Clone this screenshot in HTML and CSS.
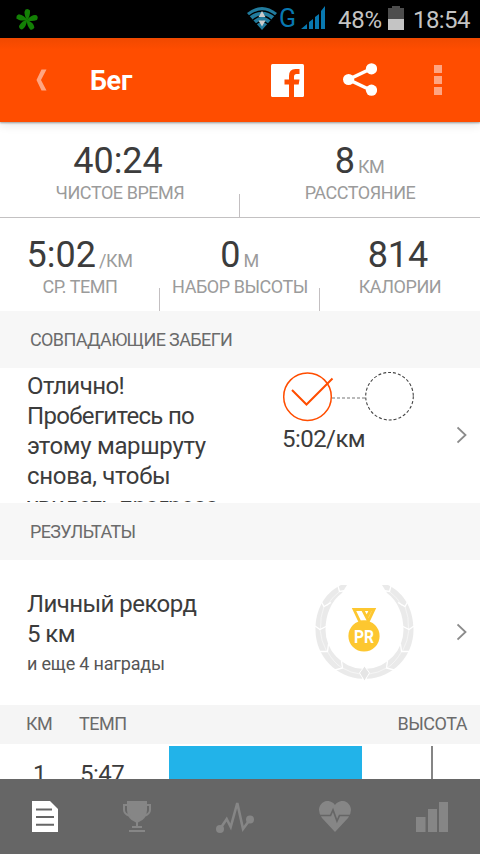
FILE: index.html
```html
<!DOCTYPE html>
<html lang="ru">
<head>
<meta charset="utf-8">
<title>Бег</title>
<link rel="stylesheet" href="styles.css">
</head>
<body>
<div class="status">
  <svg class="leaf" width="24" height="24" viewBox="0 0 24 24" fill="#138005"><path id="petal" d="M12 12.500Q8 5 10.500 1.500Q13 0 15 2.500Q15.500 8 12 12.500Z"/><use href="#petal" transform="rotate(72 12 12)"/><use href="#petal" transform="rotate(144 12 12)"/><use href="#petal" transform="rotate(216 12 12)"/><use href="#petal" transform="rotate(288 12 12)"/></svg>
  <svg class="wifi" width="30" height="24" viewBox="0 0 30 24"><path d="M0 7Q15-5 30 7L15 24Z" fill="#217b9d"/><path d="M2 10Q15 0 28 10M6 14Q15 6 24 14M9 18Q15 13 21 18" fill="none" stroke="#000" stroke-width="1.300"/><path d="M11.500 11L15 5L18.500 11ZM11.500 14.500H18.500L15 20.500Z" fill="#ccc"/></svg>
  <span class="net">G</span>
  <svg class="signal" width="24" height="23" viewBox="0 0 24 23" fill="#0878b0"><path d="M0 23L6 18V23ZM8 16L12 13V23H8ZM14 11L18 8V23H14ZM20 5L24 0V23H20Z"/></svg>
  <span class="pct">48%</span>
  <svg class="battery" width="16" height="24" viewBox="0 0 16 24"><path d="M4 0H12V2H16V13H0V2H4Z" fill="#4d4d4d"/><path d="M0 13H16V24H0Z" fill="#c4c4c4"/></svg>
  <span class="clock">18:54</span>
</div>
<header class="bar">
  <svg class="back" width="11" height="22" viewBox="0 0 11 22"><path d="M5.500 0.500H10.500L5 11L10.500 21.500H5.500L0.500 11Z" fill="#ffa581"/></svg>
  <h1>Бег</h1>
  <svg class="fb" width="33" height="33" viewBox="0 0 33 33"><rect width="33" height="33" rx="1.500" fill="#fff"/><path d="M18 33V20.500H13.500V15.500H18V12Q18 5 24.500 5H28.500V10H25.500Q23 10 23 12.500V15.500H28.500L27.700 20.500H23V33Z" fill="#ff4d00"/></svg>
  <svg class="share" width="34" height="34" viewBox="0 0 34 34"><path d="M28.500 5.500L5.500 16.500L28.500 27.500" fill="none" stroke="#fff" stroke-width="3.600"/><g fill="#fff"><circle cx="28.500" cy="5.800" r="5.600"/><circle cx="5.600" cy="16.500" r="5.600"/><circle cx="28.500" cy="27.200" r="5.600"/></g></svg>
  <svg class="more" width="8" height="30" viewBox="0 0 8 30" fill="#ffa581"><path d="M0 0H8V8H0ZM0 11H8V19H0ZM0 22H8V30H0Z"/></svg>
</header>
<main>
  <section class="stats two">
    <div class="stat"><p class="value plain">40:24</p><p class="label">ЧИСТОЕ ВРЕМЯ</p></div>
    <div class="stat"><p class="value">8<small>КМ</small></p><p class="label">РАССТОЯНИЕ</p></div>
  </section>
  <section class="stats three">
    <div class="stat"><p class="value">5:02<small>/КМ</small></p><p class="label">СР. ТЕМП</p></div>
    <div class="stat"><p class="value">0<small>М</small></p><p class="label">НАБОР ВЫСОТЫ</p></div>
    <div class="stat"><p class="value plain">814</p><p class="label">КАЛОРИИ</p></div>
  </section>
  <h2>СОВПАДАЮЩИЕ ЗАБЕГИ</h2>
  <section class="matched">
    <p class="message">Отлично!<br><span class="tight">Пробегитесь по</span><br><span class="loose">этому маршруту</span><br><span class="loose">снова, чтобы</span><br>увидеть прогресс</p>
    <div class="progress">
      <svg width="132" height="50" viewBox="0 0 132 50" fill="none"><circle cx="25.500" cy="24.700" r="23.800" stroke="#ff4d00" stroke-width="1.500"/><path d="M10 18L24.500 32.500L50.500 6.500" stroke="#ff4d00" stroke-width="2"/><path d="M50 26H84" stroke="#777" stroke-width="1.200" stroke-dasharray="3 2"/><circle cx="107.500" cy="24.200" r="23.800" stroke="#444" stroke-width="1.100" stroke-dasharray="3 2"/></svg>
      <p>5:02/км</p>
    </div>
    <svg class="chevron" width="10" height="18" viewBox="0 0 10 18"><path d="M.500 1.500L8.500 9L.500 16.500" fill="none" stroke="#8b8b8b" stroke-width="1.800"/></svg>
  </section>
  <h2>РЕЗУЛЬТАТЫ</h2>
  <section class="results">
    <div class="record"><p>Личный рекорд</p><p>5 км</p><p class="extra">и еще 4 награды</p></div>
    <svg class="award" width="100" height="98" viewBox="0 0 100 98">
      <g id="branch"><path d="M32 1H26C8 10 .500 27 .500 46A49 49 0 0 0 47 94.800V84.800A39 39 0 0 1 10.500 46C10.500 31 16 17 27 9Z" fill="#eaeaea"/><path d="M23 2L24.500 7.500L31 6.500M6.500 18L9 22.500L16 18.500M0 42L5 45.500L11 42.500M5 67.500L12.500 67.500L13.500 60M20 86L27.500 84L26.500 77" fill="none" stroke="#fff" stroke-width="1.300"/><path d="M24.500 7.500Q16 14 12 22M9 22.500Q5 33 5.500 45M5 45.500Q6 57 11.500 67M12.500 67.500Q18 78 27 84M27.500 84Q36 89 45 90" fill="none" stroke="#fff" stroke-width=".5"/></g>
      <use href="#branch" transform="translate(99 0) scale(-1 1)"/>
      <path d="M49.500 82L54.500 89L49.500 97L44.500 89Z" fill="#e5e5e5" stroke="#fff"/>
      <circle cx="49" cy="52" r="15.600" fill="#fdc730"/>
      <path d="M39 25.500H59L53 38H45ZM47.500 25.500L53.500 37M52 33L55.500 26" fill="none" stroke="#fdc730" stroke-width="2.800"/>
      <text x="49" y="58.500" text-anchor="middle" textLength="20" lengthAdjust="spacingAndGlyphs">PR</text>
    </svg>
    <svg class="chevron" width="10" height="18" viewBox="0 0 10 18"><path d="M.500 1.500L8.500 9L.500 16.500" fill="none" stroke="#8b8b8b" stroke-width="1.800"/></svg>
  </section>
  <div class="table-head"><span class="km">КМ</span><span class="pace">ТЕМП</span><span>ВЫСОТА</span></div>
  <div class="split"><span class="km">1</span><span class="pace">5:47</span><span class="tempo-bar"></span><span class="elevation"></span></div>
</main>
<nav>
  <svg class="doc" width="26" height="31" viewBox="0 0 26 31"><path d="M0 0H18L26 8V31H0Z" fill="#fff"/><path d="M4 8.500H20M4 16H22M4 23.700H22" stroke="#666" stroke-width="2"/></svg>
  <svg class="cup" width="28" height="31" viewBox="0 0 28 31"><path d="M4 0H24V9Q24 18 15 21.500V25H19V27H9V25H13V21.500Q4 18 4 9ZM6 29H22V31H6Z" fill="#868686"/><path d="M5 4H1V9Q1 13 7 15M23 4H27V9Q27 13 21 15" fill="none" stroke="#868686" stroke-width="2"/></svg>
  <svg class="graph" width="38" height="33" viewBox="0 0 38 33"><path d="M4 28L10.700 18L14.700 26L21.300 2L27 28L34 18.500" fill="none" stroke="#868686" stroke-width="2.600"/><circle cx="4" cy="28" r="4" fill="#868686"/><circle cx="34" cy="18.500" r="4" fill="#868686"/></svg>
  <svg class="heart" width="32" height="31" viewBox="0 0 32 31"><path d="M16 31L3 17Q0 13 0 9C0 1 10-4 16 4C22-4 32 1 32 9Q32 13 29 17Z" fill="#868686"/><path d="M0 14.500H11.500L14 9L18 20L20.500 14.500H32" fill="none" stroke="#666" stroke-width="1.700"/></svg>
  <svg class="bars" width="32" height="30" viewBox="0 0 32 30" fill="#868686"><path d="M0 15H9.500V30H0ZM12 7H21V30H12ZM23 0H32V30H23Z"/></svg>
</nav>
</body>
</html>
```

FILE: styles.css
```css
* { box-sizing: border-box; }
body { margin: 0; width: 480px; height: 854px; overflow: hidden; display: flex; flex-direction: column; background: #fff; color: #3c3c3c; font-family: Roboto, sans-serif; font-size: 24px; }
p, h1, h2 { margin: 0; font-weight: 400; }
svg { display: block; flex: none; }
.status { height: 38px; background: #000; color: #c4c4c4; display: flex; align-items: flex-start; padding: 6px 0 0 15px; line-height: 28px; white-space: nowrap; }
.leaf { margin-top: 2px; }
.wifi { margin: 0 0 0 208px; }
.net { color: #0878b0; width: 22px; margin-left: 2px; font-size: 25px; line-height: 25px; }
.signal { margin-left: 0; }
.pct { width: 50px; margin-left: 13px; letter-spacing: -.3px; }
.battery { margin-top: 0; }
.clock { margin-left: 9px; letter-spacing: -.6px; }
.bar { height: 84px; background: linear-gradient(#f04900, #ff4d00 12px); display: flex; align-items: center; padding: 0 38px 0 36px; position: relative; box-shadow: 0 1px 2px rgba(0,0,0,.35), 0 2px 10px rgba(0,0,0,.12); flex: none; }
.bar h1 { width: 181px; margin-left: 43px; padding-top: 2px; color: #fff; font-size: 27px; font-weight: 700; line-height: 32px; letter-spacing: -.3px; }
.share { margin-left: 39px; }
.more { margin-left: auto; }
main { height: 657px; flex: none; overflow: hidden; }
.stats { display: grid; text-align: center; }
.two { height: 96px; padding-top: 18px; grid-template-columns: 1fr 1fr; border-bottom: 1px solid #c3c1c2; }
.three { height: 93px; padding-top: 16px; grid-template-columns: repeat(3, 1fr); }
.stat { background: linear-gradient(#c3bfc1, #c3bfc1) right bottom / 1px 23px no-repeat; }
.stat:last-child { background: none; }
.value { height: 42px; font-size: 36px; line-height: 42px; }
.value.plain { padding-right: 4px; }
.value small { font-size: 18px; line-height: 1; margin: 0 1px 0 3px; color: #9b9b9b; letter-spacing: -.4px; }
.label { font-size: 18px; line-height: 22px; color: #9b9b9b; white-space: nowrap; letter-spacing: -.45px; }
h2 { height: 57px; padding-left: 30px; background: #f7f7f7; color: #6b6b6b; font-size: 18px; line-height: 57px; letter-spacing: -.62px; }
.matched { height: 135px; display: flex; align-items: flex-start; padding: 3px 13px 0 27px; letter-spacing: -.55px; }
.message { width: 255px; height: 131px; line-height: 30px; overflow: hidden; }
.message .tight { letter-spacing: -.68px; }
.message .loose { letter-spacing: -.32px; }
.progress { width: 132px; }
.progress svg { margin-top: 1px; }
.progress p { line-height: 28px; margin-top: 3px; }
.chevron { margin-left: auto; }
.matched .chevron { margin-top: 55px; }
.results { height: 145px; display: flex; padding: 24px 13px 0 27px; }
.record { width: 288px; padding-top: 5px; line-height: 30px; letter-spacing: -.55px; }
.record .extra { font-size: 18px; color: #555; letter-spacing: -.18px; }
.award text { font: 700 18px Roboto, sans-serif; fill: #fff; }
.results .chevron { margin-top: 39px; }
.table-head { height: 39px; padding: 0 13px 0 26px; display: flex; justify-content: space-between; background: #f5f5f5; color: #6b6b6b; font-size: 18px; line-height: 38px; letter-spacing: -.5px; }
.table-head .km { width: 53px; }
.table-head .pace { margin-right: auto; }
.split { height: 50px; padding: 2px 0 0 26px; display: flex; line-height: 57px; letter-spacing: -.5px; }
.split .km { width: 54px; padding-left: 7px; }
.split .pace { width: 89px; }
.tempo-bar { width: 193px; background: #22b3e9; }
.elevation { width: 2px; margin-left: 69px; background: #858585; }
nav { height: 75px; flex: none; background: #666; display: flex; align-items: flex-start; padding: 22px 32px 0; justify-content: space-between; }
.bars { margin-top: 1px; }
```
